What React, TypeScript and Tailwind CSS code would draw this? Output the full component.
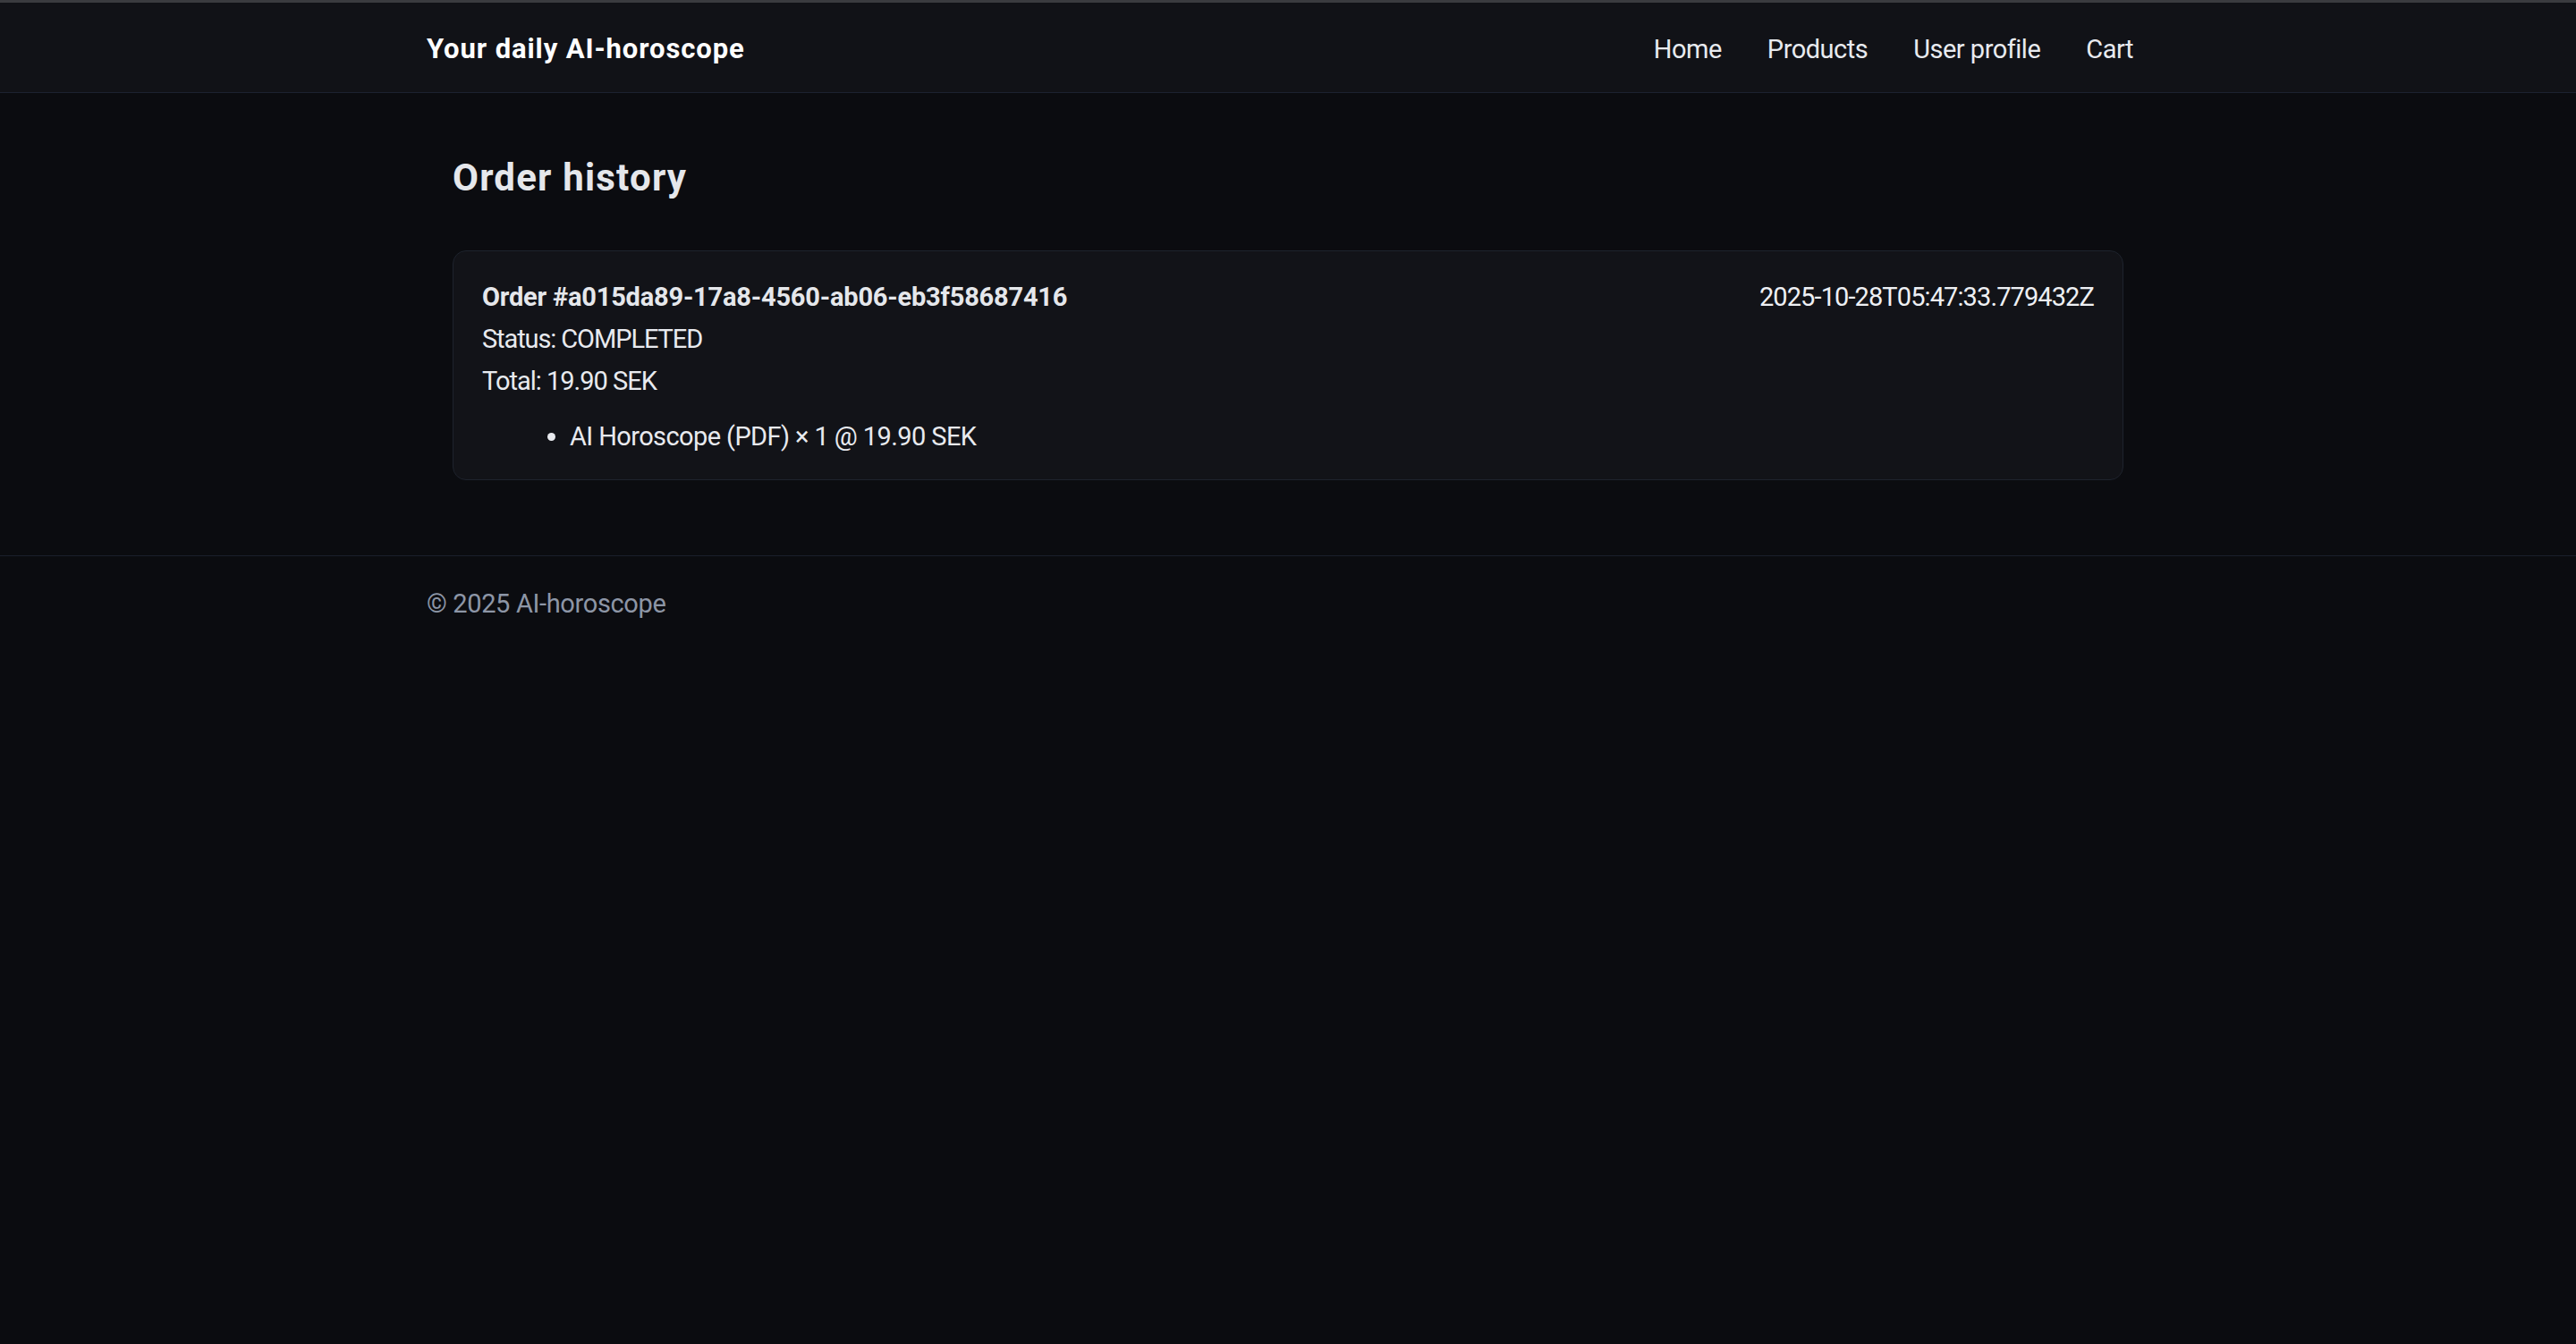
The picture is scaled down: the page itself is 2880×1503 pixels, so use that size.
const orders = [
  {
    id: 'a015da89-17a8-4560-ab06-eb3f58687416',
    status: 'COMPLETED',
    total: '19.90 SEK',
    createdAt: '2025-10-28T05:47:33.779432Z',
    items: [{ name: 'AI Horoscope (PDF)', qty: 1, price: '19.90 SEK' }],
  },
];

const navLinks = ['Home', 'Products', 'User profile', 'Cart'];

export default function App() {
  return (
    <div
      className="min-h-[1503px] bg-[#0b0c10] text-[#e8eaef]"
      style={{ fontFamily: 'Roboto, "Noto Sans", sans-serif' }}
    >
      <header className="h-[104px] border-t-[3px] border-b border-t-[#3a3b3f] border-b-[#1c2230] bg-[#111217]">
        <div className="mx-auto flex h-full w-[1926px] items-center justify-between pt-[4px]">
          <a className="text-[31px] font-bold leading-[44px] tracking-[0.9px] text-white">Your daily AI-horoscope</a>
          <nav className="flex items-center gap-[51px] pr-[18px]">
            {navLinks.map((link) => (
              <a key={link} className="text-[29px] leading-[44px] tracking-[-0.5px] text-[#e8eaef]">
                {link}
              </a>
            ))}
          </nav>
        </div>
      </header>

      <main className="mx-auto w-[1868px] pt-[70px] pb-[84px]">
        <h2 className="mb-[56px] text-[42px] font-bold leading-[50px] tracking-[1.2px] text-[#e5e7eb]">
          Order history
        </h2>
        {orders.map((order) => (
          <div
            key={order.id}
            className="rounded-[15px] border border-[#1e232d] bg-[#121318] px-[32px] pt-[28px] pb-[24px]"
          >
            <div className="flex items-start justify-between">
              <div className="text-[29px] font-bold leading-[47px] tracking-[-0.2px] text-[#e5e7eb]">
                Order #{order.id}
              </div>
              <div className="text-[29px] leading-[47px] tracking-[-0.9px] text-[#eef0f4]">{order.createdAt}</div>
            </div>
            <div className="text-[29px] leading-[47px] tracking-[-1.1px]">Status: {order.status}</div>
            <div className="text-[29px] leading-[47px] tracking-[-1px]">Total: {order.total}</div>
            <ul className="mt-[15px] list-disc pl-[98px] text-[29px] leading-[47px] tracking-[-0.6px]">
              {order.items.map((item) => (
                <li key={item.name}>
                  {item.name} × {item.qty} @ {item.price}
                </li>
              ))}
            </ul>
          </div>
        ))}
      </main>

      <footer className="border-t border-[#1a202b] pt-[30px]">
        <div className="mx-auto w-[1926px] text-[29px] leading-[47px] tracking-[-0.35px] text-[#8d96a6]">
          © 2025 AI-horoscope
        </div>
      </footer>
    </div>
  );
}
